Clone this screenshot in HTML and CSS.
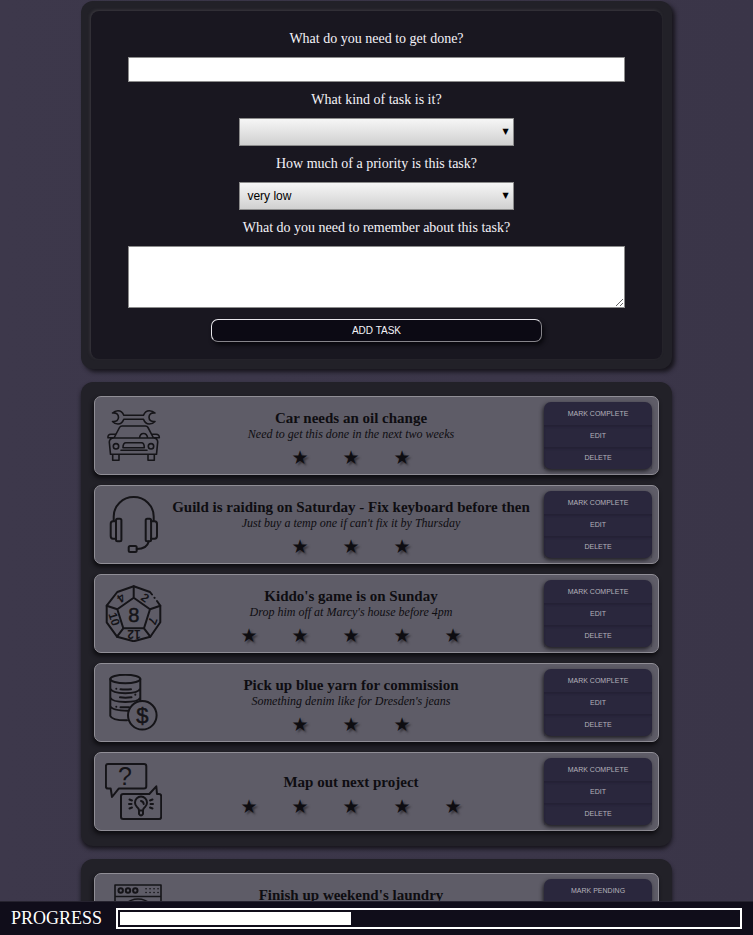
FILE: index.html
```html
<!DOCTYPE html>
<html lang="en">
<head>
<meta charset="utf-8">
<title>Task list</title>
<link rel="stylesheet" href="styles.css">
</head>
<body>
<main>
  <section class="panel form-panel">
    <form class="task-form">
      <label for="task">What do you need to get done?</label>
      <input class="field" id="task" type="text">
      <label for="kind">What kind of task is it?</label>
      <div class="picker">
        <select id="kind"><option></option><option>home</option><option>family</option></select>
      </div>
      <label for="priority">How much of a priority is this task?</label>
      <div class="picker">
        <select id="priority"><option>very low</option><option>low</option><option>medium</option><option>high</option></select>
      </div>
      <label for="notes">What do you need to remember about this task?</label>
      <textarea class="field" id="notes"></textarea>
      <button class="add" type="button">ADD TASK</button>
    </form>
  </section>

  <section class="panel list">
    <article class="card">
      <svg class="icon" viewBox="0 0 57 57" aria-hidden="true">
        <path d="M7.500 6C9 4.500 11 3.700 13 3.700C15.500 3.700 17.700 5.500 18.800 8.300H38.500C39.500 5.500 41.800 3.700 44.300 3.700C46.500 3.700 48.500 4.500 50 6C46 5.500 44 7.500 44 10.300S46 15 50 14.500C48.500 16.200 46.500 17 44.300 17C41.800 17 39.500 15.200 38.500 12.300H18.800C17.700 15.200 15.500 17 13 17C11 17 9 16.200 7.500 14.500C11.500 15 13.500 13 13.500 10.300S11.500 5.500 7.500 6Z"/>
        <path d="M9 31L14.500 20.500Q15.300 19 17 19H40.500Q42.200 19 43 20.500L48.500 31M9 31H48.500Q52.700 31.500 52.700 35L51.500 47.300H5.500L4.300 35Q4.300 31.500 9 31ZM9 30.800H3Q2.500 27.300 6 27.300H10.500M48.500 30.800H54.300Q54.500 27.300 51 27.300H47M34.500 31Q35 26.500 38.500 26.500T42.700 31M7.700 47.300V53.300H14V47.300M43 47.300V53.300H49.300V47.300"/>
        <circle cx="11" cy="39.300" r="2.700"/><circle cx="46" cy="39.300" r="2.700"/>
        <path d="M18 40.700Q18 35.700 21 35.700H36.500Q39.300 35.700 39.300 40.700ZM16 43.200H42"/>
      </svg>
      <div class="info">
        <h2>Car needs an oil change</h2>
        <p>Need to get this done in the next two weeks</p>
        <div class="stars"><span>★</span><span>★</span><span>★</span></div>
      </div>
      <div class="actions"><button type="button">MARK COMPLETE</button><button type="button">EDIT</button><button type="button">DELETE</button></div>
    </article>

    <article class="card">
      <svg class="icon bold" viewBox="0 0 57 57" aria-hidden="true">
        <path d="M8.700 25V20.500A20 19.500 0 0 1 48.700 20.500V25M43.700 45.500Q42 53 31.700 53"/>
        <path d="M11 25.300H8Q5.700 25.300 5.700 28V40Q5.700 42.700 8 42.700H11M46 25.300H49.500Q52 25.300 52 28V40Q52 42.700 49.500 42.700H46"/>
        <rect x="11" y="22.700" width="5.400" height="22.500" rx="1.500"/><rect x="40.700" y="22.700" width="5.400" height="22.500" rx="1.500"/><rect x="23.700" y="50" width="8" height="6" rx="1.500"/>
      </svg>
      <div class="info">
        <h2>Guild is raiding on Saturday - Fix keyboard before then</h2>
        <p>Just buy a temp one if can't fix it by Thursday</p>
        <div class="stars"><span>★</span><span>★</span><span>★</span></div>
      </div>
      <div class="actions"><button type="button">MARK COMPLETE</button><button type="button">EDIT</button><button type="button">DELETE</button></div>
    </article>

    <article class="card">
      <svg class="icon bold" viewBox="0 0 57 57" aria-hidden="true">
        <path d="M52 16L55.300 20.700V37.300L45.300 51.700L28.700 56.300L12 51.700L1.700 37.300V20.700L12.300 7L28.700 1.300L45 7L47 9.500M49.500 12.800L49.600 12.900"/>
        <path d="M28.700 12.700L45 24.300L39 43.300H18.300L12.300 24.300ZM28.700 1.300V12.700M45 24.300L55.300 20.700M39 43.300L45.300 51.700M18.300 43.300L12 51.700M12.300 24.300L1.700 20.700"/>
        <text class="outlined" x="28.700" y="36.500" font-size="20">8</text>
        <text font-size="12" transform="translate(16 13) rotate(145)" y="4">4</text>
        <text font-size="12" transform="translate(40 13) rotate(35)" y="4">2</text>
        <text font-size="12" transform="translate(9 34) rotate(72)" y="4">10</text>
        <text font-size="12" transform="translate(47.500 36) rotate(110)" y="4">7</text>
        <text font-size="12" transform="translate(29 49) rotate(180)" y="4">12</text>
      </svg>
      <div class="info">
        <h2>Kiddo's game is on Sunday</h2>
        <p>Drop him off at Marcy's house before 4pm</p>
        <div class="stars"><span>★</span><span>★</span><span>★</span><span>★</span><span>★</span></div>
      </div>
      <div class="actions"><button type="button">MARK COMPLETE</button><button type="button">EDIT</button><button type="button">DELETE</button></div>
    </article>

    <article class="card">
      <svg class="icon bold" viewBox="0 0 57 57" aria-hidden="true">
        <ellipse cx="20.300" cy="5" rx="15" ry="4.300"/>
        <path d="M5.300 5V42Q7 46.500 22 46.300M35.300 5V26.500M5.300 14.500Q7 19.300 20.300 19.300T35.300 14.500M5.300 23.500Q7 28 20.300 28T35.300 23.500M5.300 32Q7 36.700 23 36.700"/>
        <path d="M11.300 14.700V14.800M15.500 15.300Q20 15.800 26 15.300M11.300 32.700V32.800M15.500 33.300H24M30.300 20.600V20.700M15 23.300Q20 24 26.500 23.300"/>
        <circle cx="37.300" cy="41.300" r="14.300"/>
        <text class="outlined" x="37.300" y="49" font-size="22">$</text>
      </svg>
      <div class="info">
        <h2>Pick up blue yarn for commission</h2>
        <p>Something denim like for Dresden's jeans</p>
        <div class="stars"><span>★</span><span>★</span><span>★</span></div>
      </div>
      <div class="actions"><button type="button">MARK COMPLETE</button><button type="button">EDIT</button><button type="button">DELETE</button></div>
    </article>

    <article class="card">
      <svg class="icon bold" viewBox="0 0 57 57" aria-hidden="true">
        <path d="M3 1H39Q41.300 1 41.300 3.300V23.300Q41.300 25.600 39 25.600H13.700L7 34L5.700 25.600H3Q.9 25.600 .9 23.300V3.300Q.9 1 3 1ZM18.300 31H44.300L51.300 23.300L52 31H54Q56.200 31 56.200 33.300V53.700Q56.200 56 54 56H18.300Q16 56 16 53.700V33.300Q16 31 18.300 31Z"/>
        <path d="M34 47.500Q34 45.500 32 44A6 6 0 1 1 40 44Q38 45.500 38 47.500ZM34 47.500V51Q36 54 38 51V47.500M36 38Q38.500 38.500 38.700 41M24.500 36.500L27 37.500M24 41H26.500M24.500 45.500L27 44.500M47.500 36.500L45 37.500M48 41H45.500M47.500 45.500L45 44.500"/>
        <text class="thin" x="20" y="22" font-size="25">?</text>
      </svg>
      <div class="info">
        <h2>Map out next project</h2>
        <div class="stars"><span>★</span><span>★</span><span>★</span><span>★</span><span>★</span></div>
      </div>
      <div class="actions"><button type="button">MARK COMPLETE</button><button type="button">EDIT</button><button type="button">DELETE</button></div>
    </article>
  </section>

  <section class="panel list">
    <article class="card">
      <svg class="icon" viewBox="0 0 57 57" aria-hidden="true">
        <path d="M10 1H56V56H10ZM10 12.500H56"/>
        <g class="bold"><circle cx="15.700" cy="6.500" r="2.200"/><circle cx="23" cy="6.500" r="2.200"/><circle cx="30.300" cy="6.500" r="2.200"/></g>
        <path d="M41 4.800H41.100M45 4.800H45.100M49 4.800H49.100M53 4.800H53.100M41 8.500H41.100M45 8.500H45.100M49 8.500H49.100M53 8.500H53.100"/>
        <circle cx="33" cy="33" r="18"/><circle cx="33" cy="33" r="13"/>
      </svg>
      <div class="info">
        <h2>Finish up weekend's laundry</h2>
        <p>Wash, dry and fold</p>
        <div class="stars"><span>★</span><span>★</span><span>★</span></div>
      </div>
      <div class="actions"><button type="button">MARK PENDING</button><button type="button">EDIT</button><button type="button">DELETE</button></div>
    </article>
  </section>
</main>

<footer class="status">
  <span id="progress-label">PROGRESS</span>
  <div class="track" role="progressbar" aria-labelledby="progress-label" aria-valuenow="37"><div class="fill" style="width: 37.4%"></div></div>
</footer>
</body>
</html>
```
FILE: styles.css
```css
* { box-sizing: border-box; }

body {
  margin: 0;
  padding: 1px 0 48px;
  background: linear-gradient(90deg, #3d384b, #3a3548);
  font-family: "Liberation Serif", serif;
}

main {
  display: flex;
  flex-direction: column;
  gap: 13px;
  width: 78.5%;
  margin: 0 auto;
}

.panel {
  border-radius: 12px;
  background: #222128;
  box-shadow: 0 3px 4px #17151c;
}

.form-panel {
  padding: 10px;
  box-shadow: 3px 3px 4px #17151c;
}

.task-form {
  display: flex;
  flex-direction: column;
  align-items: center;
  padding: 10px 0 17px;
  border-radius: 8px;
  background: #191720;
  box-shadow: -1px -1px 3px #3a383e;
}

.task-form label {
  margin: 10px 0;
  color: #f4f2f8;
  font-size: 14px;
  line-height: 16px;
}

.field {
  width: 87%;
  height: 25px;
  margin: 0;
  border: 1px solid #8c8c8c;
  background: #fff;
}

textarea.field {
  height: 62px;
  padding: 1px;
}

.picker {
  position: relative;
  width: 48%;
}

.picker select {
  display: block;
  width: 100%;
  height: 28px;
  padding: 0 7px;
  border: 1px solid #8c8c8c;
  border-radius: 0;
  appearance: none;
  background: linear-gradient(#f6f6f6, #d0d0d0);
  color: #000;
  font: 12px/16px "Liberation Sans", sans-serif;
}

.picker::after {
  content: "▼";
  position: absolute;
  top: 9px;
  right: 5px;
  color: #000;
  font: 8px/10px "DejaVu Sans", sans-serif;
  pointer-events: none;
}

.add {
  width: 58%;
  height: 23px;
  margin-top: 11px;
  padding: 0;
  border: 1px solid;
  border-color: #e6e5ea #86848a #86848a #e6e5ea;
  border-radius: 7px;
  background: #0c0a14;
  box-shadow: 2px 3px 4px #08070c;
  color: #f4f2f8;
  font: 10px/12px "Liberation Sans", sans-serif;
}

.list {
  display: flex;
  flex-direction: column;
  gap: 10px;
  padding: 14px 13px 15px;
}

.card {
  display: grid;
  grid-template-columns: 57px 1fr 108px;
  column-gap: 8px;
  align-items: center;
  min-height: 79px;
  padding: 5px 6px 5px 10px;
  border: 1px solid #908e96;
  border-radius: 7px;
  background: #5e5c67;
  box-shadow: -1px 3px 4px #0d0c10;
  color: #0e0d11;
}

.icon {
  width: 57px;
  height: 57px;
  fill: none;
  stroke: #151418;
  stroke-width: 1.6px;
  stroke-linecap: round;
  stroke-linejoin: round;
}

.bold { stroke-width: 2px; }

.icon text {
  fill: #151418;
  stroke: none;
  font-family: "Liberation Sans", sans-serif;
  font-weight: bold;
  text-anchor: middle;
}

.icon .thin { font-weight: normal; }

.icon .outlined {
  stroke: #151418;
  stroke-width: 0.5px;
  font-weight: normal;
}

.info {
  padding: 2px 4px 0 0;
  text-align: center;
}

.info h2 {
  margin: 0;
  font-size: 15px;
  line-height: 18px;
}

.info p {
  margin: 0;
  font-size: 12px;
  font-style: italic;
  line-height: 15px;
}

.stars {
  display: flex;
  justify-content: center;
  margin-top: 8px;
  font: 19px/14px "DejaVu Sans", sans-serif;
  text-shadow: 2px 2px 2px #38363d;
}

.stars span {
  flex: 0 1 51px;
}

.actions {
  display: flex;
  flex-direction: column;
  padding-top: 1px;
  border-radius: 7px;
  background: #2a273d;
  box-shadow: -1px 2px 4px #1c1b21;
}

.actions button {
  height: 22px;
  padding: 0;
  border: 0;
  background: none;
  color: #b4b2ba;
  font: 7px/10px "Liberation Sans", sans-serif;
}

.actions button + button { box-shadow: inset 0 2px 2px #242135; }

.status {
  position: fixed;
  right: 0;
  bottom: 0;
  left: 0;
  display: flex;
  align-items: center;
  gap: 14px;
  height: 34px;
  padding: 0 11px;
  border-top: 1px solid #26232f;
  background: #100d1a;
  color: #fff;
  font-size: 18px;
}

.track {
  flex: 1;
  height: 21px;
  padding: 2px;
  border: 2px solid #fff;
}

.fill {
  height: 100%;
  background: #fff;
}
```
